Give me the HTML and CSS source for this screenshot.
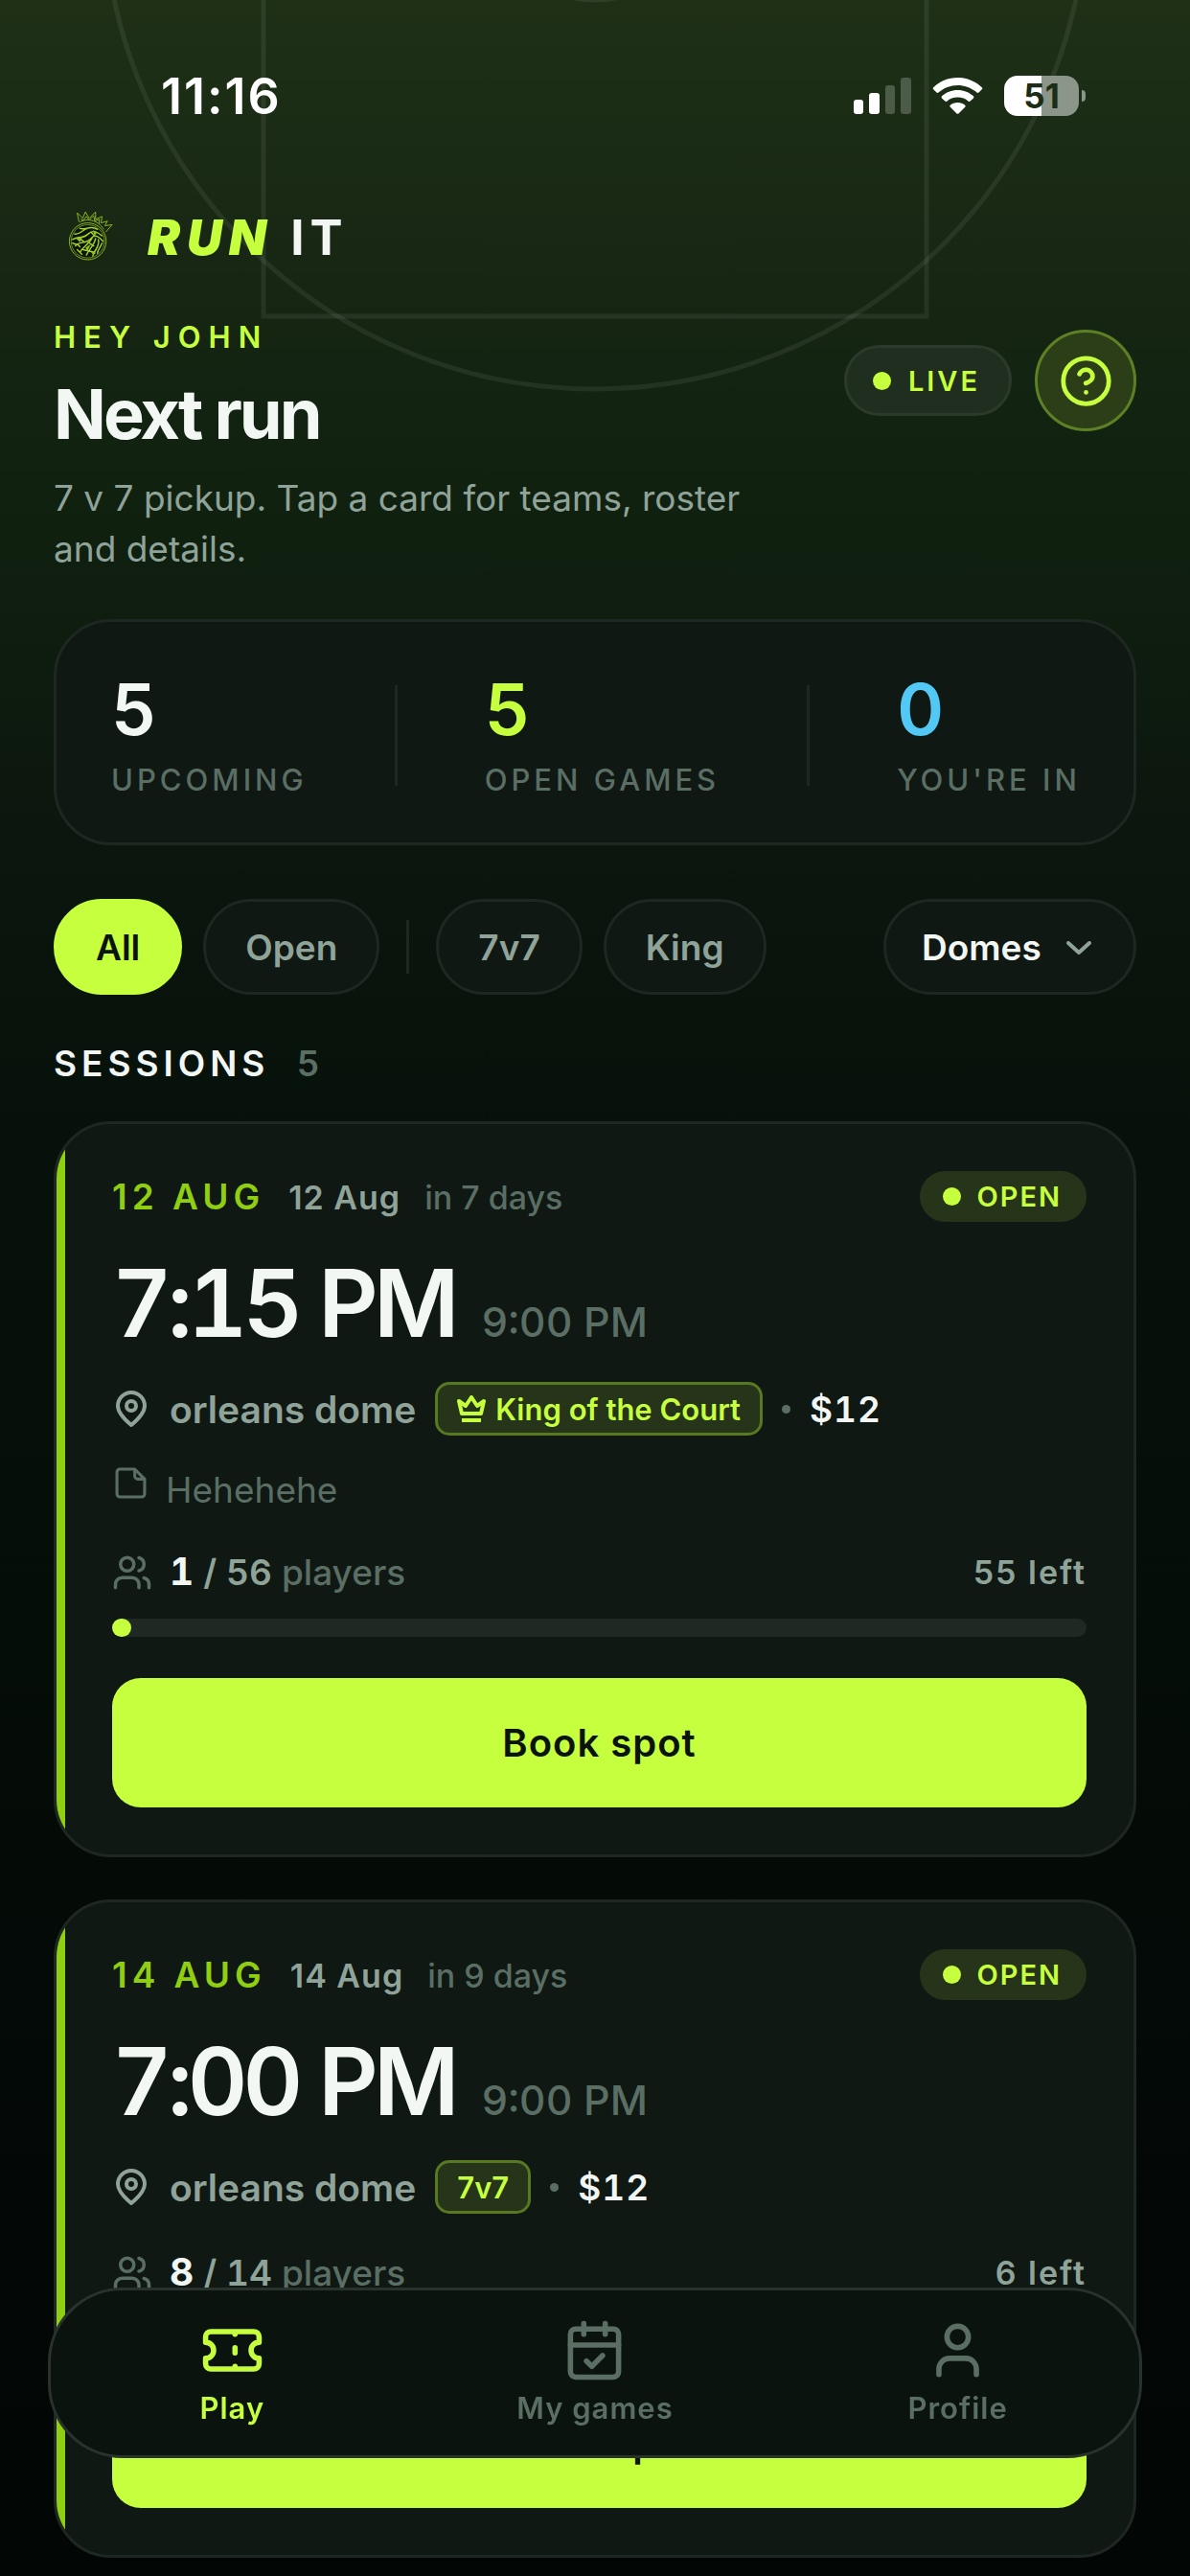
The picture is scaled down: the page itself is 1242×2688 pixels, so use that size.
FILE: index.html
```html
<!DOCTYPE html>
<html lang="en">
<head>
<meta charset="utf-8">
<meta name="viewport" content="width=device-width, initial-scale=1">
<title>Run It – Next run</title>
<link rel="stylesheet" href="styles.css">
</head>
<body>
<svg class="court" viewBox="0 0 1242 420" aria-hidden="true">
  <circle cx="621" cy="-107" r="513"/>
  <circle cx="621" cy="-113" r="113"/>
  <path d="M275-10V330H967V-10"/>
</svg>

<div class="status">
  <span class="clock">11:16</span>
  <div class="signals">
    <svg class="bars" viewBox="0 0 60 38" aria-hidden="true">
      <rect x="0" y="23" width="10" height="15" rx="3"/>
      <rect x="16" y="16" width="11" height="22" rx="3"/>
      <rect class="off" x="33" y="8" width="10" height="30" rx="3"/>
      <rect class="off" x="49" y="0" width="11" height="38" rx="3"/>
    </svg>
    <svg class="wifi" viewBox="0 0 52 38" aria-hidden="true">
      <path d="M26 0C36 0 45 4 51.300 10.200Q52.300 11.300 51.300 12.300L48 15.600Q47 16.500 46 15.600C40.600 10.700 33.600 7.900 26 7.900S11.400 10.700 6 15.600Q5 16.500 4 15.600L.7 12.300Q-.3 11.300.7 10.200C7 4 16 0 26 0Z"/>
      <path d="M26 13C32.400 13 38.200 15.400 42.500 19.300Q43.500 20.300 42.500 21.400L39.200 24.600Q38.200 25.500 37.200 24.700C34.200 22.100 30.300 20.600 26 20.600S17.800 22.100 14.800 24.700Q13.800 25.500 12.800 24.600L9.500 21.400Q8.500 20.300 9.500 19.300C13.800 15.400 19.600 13 26 13Z"/>
      <path d="M26 26C29 26 31.700 27 33.700 28.700Q34.700 29.700 33.700 30.700L27 37.400Q26 38.300 25 37.400L18.300 30.700Q17.300 29.700 18.300 28.700C20.300 27 23 26 26 26Z"/>
    </svg>
    <div class="battery"><span class="battery-level">51</span><i class="battery-tip"></i></div>
  </div>
</div>

<main class="page">
  <div class="brand">
    <svg class="crest" viewBox="0 0 50 54" aria-hidden="true">
      <g fill="none" stroke="#8fb822" stroke-width="1">
        <path d="M13 11 11 1 17 7 20 0 24 7 31 0 31 8 38 5 37 12 44 10 41 15 49 14 42 22"/>
        <path d="M14 11C21 7 33 8 40 19M15 8 18 9 21 5 24 9 29 4 30 10 35 8 35 13"/>
        <circle cx="22.500" cy="32" r="20"/>
      </g>
      <circle cx="22.500" cy="32" r="18" fill="#0c1408" stroke="#6c8f1c" stroke-width="1"/>
      <g fill="none" stroke="#a3d22a" stroke-width="1.500" stroke-linecap="round">
        <path d="M8 24C14 25 16 20 22 18M14 18C20 20 26 14 33 19M6 30C12 26 17 30 23 24C28 19 33 22 38 26"/>
        <path d="M9 37C14 31 20 36 27 28C30 24 35 27 39 32M12 28 18 32M6 34C9 36 12 34 14 38"/>
        <path d="M27 29C23 36 17 38 14 44M31 29C30 36 24 40 21 47M34 30C36 38 29 42 28 48M38 34C36 39 33 42 33 45M17 41C22 43 25 41 30 45M11 41 16 46M23 33 29 37M26 22 30 26"/>
      </g>
      <path d="M10 29 17 27 14 33ZM20 39 26 35 22 43ZM28 20 33 22 30 26ZM26 44 32 41 29 47Z" fill="#8fc31f"/>
    </svg>
    <span class="wordmark"><em>RUN</em> IT</span>
  </div>

  <header class="hero">
    <div class="hero-text">
      <p class="eyebrow">HEY JOHN</p>
      <h1>Next run</h1>
      <p class="lead">7 v 7 pickup. Tap a card for teams, roster and details.</p>
    </div>
    <div class="hero-actions">
      <span class="live"><i class="dot"></i>LIVE</span>
      <button class="help" type="button" aria-label="Help">
        <svg viewBox="0 0 24 24" aria-hidden="true"><circle cx="12" cy="12" r="10"/><path d="M9.100 9a3 3 0 0 1 5.800 1c0 2-3 3-3 3M12 17h.01"/></svg>
      </button>
    </div>
  </header>

  <section class="stats" aria-label="Totals">
    <p class="stat"><strong>5</strong><span>UPCOMING</span></p>
    <i class="stat-rule"></i>
    <p class="stat stat-open"><strong>5</strong><span>OPEN GAMES</span></p>
    <i class="stat-rule"></i>
    <p class="stat stat-in"><strong>0</strong><span>YOU'RE IN</span></p>
  </section>

  <div class="filters">
    <button class="chip chip-on" type="button" aria-pressed="true">All</button>
    <button class="chip" type="button" aria-pressed="false">Open</button>
    <i class="filter-rule"></i>
    <button class="chip" type="button" aria-pressed="false">7v7</button>
    <button class="chip" type="button" aria-pressed="false">King</button>
    <div class="venue">
      <select aria-label="Venue"><option>Domes</option></select>
      <svg viewBox="0 0 26 14" aria-hidden="true"><path d="M2 2 13 12 24 2"/></svg>
    </div>
  </div>

  <h2 class="section-title">SESSIONS <span>5</span></h2>

  <div class="sessions">
    <article class="card">
      <div class="card-top">
        <div class="when"><strong>12 AUG</strong><span>12 Aug</span><small>in 7 days</small></div>
        <span class="state"><i class="dot"></i>OPEN</span>
      </div>
      <div class="time"><strong>7:15 PM</strong><span>9:00 PM</span></div>
      <div class="place">
        <svg class="pin" viewBox="0 0 32 38" aria-hidden="true"><path d="M30 16C30 24 22 31 16 36C10 31 2 24 2 16A14 14 0 0 1 30 16Z"/><circle cx="16" cy="16" r="5"/></svg>
        <span class="venue-name">orleans dome</span>
        <span class="tag"><svg class="crown" viewBox="0 0 30 28" aria-hidden="true"><path d="M5 19 2 6 9 11 15 2 21 11 28 6 25 19ZM5 26H25"/></svg>King of the Court</span>
        <i class="sep"></i>
        <span class="price">$12</span>
      </div>
      <p class="note">
        <svg viewBox="0 0 32 32" aria-hidden="true"><path d="M20 2H5A3 3 0 0 0 2 5V27A3 3 0 0 0 5 30H27A3 3 0 0 0 30 27V12ZM20 2V9A3 3 0 0 0 23 12H30"/></svg>
        Hehehehe
      </p>
      <div class="players">
        <svg viewBox="0 0 24 24" aria-hidden="true"><path d="M16 21v-2a4 4 0 0 0-4-4H6a4 4 0 0 0-4 4v2M16 3.130a4 4 0 0 1 0 7.750M22 21v-2a4 4 0 0 0-3-3.870"/><circle cx="9" cy="7" r="4"/></svg>
        <span class="count"><b>1</b> / 56 <small>players</small></span>
        <span class="left">55 left</span>
      </div>
      <div class="meter"><i style="width:2%"></i></div>
      <button class="book" type="button">Book spot</button>
    </article>

    <article class="card">
      <div class="card-top">
        <div class="when"><strong>14 AUG</strong><span>14 Aug</span><small>in 9 days</small></div>
        <span class="state"><i class="dot"></i>OPEN</span>
      </div>
      <div class="time"><strong>7:00 PM</strong><span>9:00 PM</span></div>
      <div class="place">
        <svg class="pin" viewBox="0 0 32 38" aria-hidden="true"><path d="M30 16C30 24 22 31 16 36C10 31 2 24 2 16A14 14 0 0 1 30 16Z"/><circle cx="16" cy="16" r="5"/></svg>
        <span class="venue-name">orleans dome</span>
        <span class="tag">7v7</span>
        <i class="sep"></i>
        <span class="price">$12</span>
      </div>
      <div class="players">
        <svg viewBox="0 0 24 24" aria-hidden="true"><path d="M16 21v-2a4 4 0 0 0-4-4H6a4 4 0 0 0-4 4v2M16 3.130a4 4 0 0 1 0 7.750M22 21v-2a4 4 0 0 0-3-3.870"/><circle cx="9" cy="7" r="4"/></svg>
        <span class="count"><b>8</b> / 14 <small>players</small></span>
        <span class="left">6 left</span>
      </div>
      <div class="meter"><i style="width:57%"></i></div>
      <button class="book" type="button">Book spot</button>
    </article>
  </div>
</main>

<nav class="tabs" aria-label="Main">
  <a class="tab tab-on" href="#play" aria-current="page">
    <svg viewBox="0 0 24 24" aria-hidden="true"><path d="M2 9a3 3 0 0 1 0 6v2a2 2 0 0 0 2 2h16a2 2 0 0 0 2-2v-2a3 3 0 0 1 0-6V7a2 2 0 0 0-2-2H4a2 2 0 0 0-2 2ZM13 5v1M13 11v2M13 18v1"/></svg>
    Play
  </a>
  <a class="tab" href="#games">
    <svg viewBox="0 0 24 24" aria-hidden="true"><path d="M8 2v4M16 2v4M3 10h18M9 16l2 2 4-4"/><rect x="3" y="4" width="18" height="18" rx="2"/></svg>
    My games
  </a>
  <a class="tab" href="#profile">
    <svg viewBox="0 0 24 24" aria-hidden="true"><path d="M19 21v-2a4 4 0 0 0-4-4H9a4 4 0 0 0-4 4v2"/><circle cx="12" cy="7" r="4"/></svg>
    Profile
  </a>
</nav>
</body>
</html>
```
FILE: styles.css
```css
:root {
  --lime: #c6ff3d;
  --lime-deep: #90ce12;
  --white: #f2f7f4;
  --soft: #8fa399;
  --dim: #5a6e64;
  --panel: #0f1813;
  --line: #1e2722;
  --tint: #26341a;
}

* { box-sizing: border-box; }

html { background: #030806; }

body {
  margin: 0;
  min-height: 100vh;
  position: relative;
  background: linear-gradient(180deg, #1f3017 0, #162613 300px, #10200f 560px, #0b160e 880px, #07110b 1200px, #050d08 1700px, #030806 2300px, #020605 2688px);
  color: var(--white);
  font-family: Inter, "Liberation Sans", sans-serif;
  font-size: 37px;
}

p, h1, h2 { margin: 0; }
button, select { font-family: inherit; cursor: pointer; }
svg { display: block; flex: none; }
.dot { width: 19px; height: 19px; border-radius: 50%; background: var(--lime); }

/* Court markings behind the header */
.court {
  position: absolute;
  top: 0;
  left: 0;
  width: 100%;
  fill: none;
  stroke: #ffffff;
  stroke-opacity: .07;
  stroke-width: 5;
}

/* Status bar */
.status {
  position: relative;
  height: 200px;
  padding: 0 109px 0 168px;
  display: flex;
  align-items: center;
  justify-content: space-between;
  color: #ffffff;
}
.clock { font-size: 52px; font-weight: 600; letter-spacing: 2px; }
.signals { display: flex; align-items: center; gap: 22px; }
.bars, .wifi { height: 38px; fill: #ffffff; }
.bars { width: 60px; }
.bars .off { opacity: .22; }
.wifi { width: 53px; }
.battery {
  position: relative;
  width: 85px;
  height: 42px;
}
.battery-level {
  display: block;
  width: 78px;
  border-radius: 14px;
  background: linear-gradient(90deg, #ffffff 50%, #8b9588 50%);
  color: #1c2d17;
  font-size: 35px;
  font-weight: 700;
  line-height: 42px;
  text-align: center;
}
.battery-tip {
  position: absolute;
  right: 0;
  top: 15px;
  width: 4px;
  height: 12px;
  border-radius: 0 4px 4px 0;
  background: #8b9588;
}

.page { position: relative; padding: 0 56px 16px; }

/* Brand */
.brand {
  height: 94px;
  padding-left: 14px;
  display: flex;
  align-items: center;
  gap: 36px;
}
.crest { width: 48px; height: 54px; }
.wordmark {
  font-size: 51px;
  font-weight: 700;
  letter-spacing: 6px;
}
.wordmark em { color: var(--lime); font-weight: 900; letter-spacing: 7px; }

/* Greeting */
.hero {
  margin-top: 38px;
  display: flex;
  justify-content: space-between;
}
.hero-text { width: 740px; }
.eyebrow {
  color: var(--lime);
  font-size: 31px;
  font-weight: 600;
  line-height: 40px;
  letter-spacing: 8px;
}
h1 {
  margin-top: 16px;
  font-size: 72px;
  font-weight: 700;
  line-height: 88px;
  letter-spacing: -3px;
}
.lead { margin-top: 17px; color: var(--soft); line-height: 53px; }
.hero-actions {
  height: 106px;
  margin-top: 12px;
  display: flex;
  align-items: center;
  gap: 24px;
}
.live {
  height: 74px;
  padding: 0 30px 0 27px;
  display: flex;
  align-items: center;
  gap: 18px;
  border: 3px solid #2b3a2a;
  border-radius: 37px;
  background: #202e1f;
  color: var(--lime);
  font-size: 29px;
  font-weight: 600;
  letter-spacing: 3px;
}
.help {
  width: 106px;
  height: 106px;
  padding: 0;
  display: grid;
  place-items: center;
  border: 3px solid #5e8024;
  border-radius: 50%;
  background: #2b3e18;
  color: var(--lime);
}
.help svg { width: 57px; height: 57px; }
.help svg, .tab svg, .players svg {
  fill: none;
  stroke: currentColor;
  stroke-width: 2;
  stroke-linecap: round;
  stroke-linejoin: round;
}

/* Totals */
.stats {
  margin-top: 47px;
  padding: 51px 55px 45px 57px;
  display: flex;
  align-items: center;
  justify-content: space-between;
  border: 3px solid var(--line);
  border-radius: 60px;
  background: var(--panel);
}
.stat { display: flex; flex-direction: column; gap: 14px; }
.stat span { color: var(--dim); font-size: 31px; font-weight: 500; line-height: 40px; letter-spacing: 4px; }
.stat strong { font-size: 74px; font-weight: 600; line-height: 80px; }
.stat-open strong { color: var(--lime); }
.stat-in strong { color: #52c8f5; }
.stat-rule { width: 3px; height: 105px; background: var(--line); }

/* Filters */
.filters { margin-top: 56px; display: flex; align-items: center; gap: 22px; }
.chip {
  height: 100px;
  padding: 0 41px;
  border: 3px solid var(--line);
  border-radius: 50px;
  background: var(--panel);
  color: var(--soft);
  font-size: 37px;
  font-weight: 600;
}
.chip-on { border-color: var(--lime); background: var(--lime); color: #0a140c; }
.filter-rule { width: 3px; height: 56px; margin: 0 6px; background: var(--line); }
.venue { position: relative; margin-left: auto; }
.venue select {
  height: 100px;
  padding: 0 96px 0 37px;
  appearance: none;
  border: 3px solid var(--line);
  border-radius: 50px;
  background: var(--panel);
  color: var(--white);
  font-size: 37px;
  font-weight: 600;
}
.venue svg {
  position: absolute;
  right: 47px;
  top: 44px;
  width: 26px;
  height: 14px;
  fill: none;
  stroke: var(--soft);
  stroke-width: 4;
  stroke-linecap: round;
  stroke-linejoin: round;
  pointer-events: none;
}

.section-title {
  margin-top: 48px;
  font-size: 37px;
  font-weight: 600;
  line-height: 48px;
  letter-spacing: 5px;
}
.section-title span { margin-left: 14px; color: var(--dim); }

/* Session cards */
.sessions { margin-top: 36px; display: flex; flex-direction: column; gap: 44px; }
.card {
  position: relative;
  padding: 49px 49px 49px 58px;
  overflow: hidden;
  border: 3px solid var(--line);
  border-radius: 60px;
  background: var(--panel);
}
.card::before {
  content: "";
  position: absolute;
  inset: 0 auto 0 0;
  width: 9px;
  background: var(--lime-deep);
}
.card-top { height: 53px; display: flex; align-items: center; justify-content: space-between; }
.when { display: flex; align-items: baseline; gap: 25px; }
.when strong { color: var(--lime-deep); font-size: 37px; font-weight: 600; letter-spacing: 5px; }
.when span { color: var(--soft); font-size: 34px; font-weight: 600; letter-spacing: 1px; }
.when small { color: var(--dim); font-size: 34px; font-weight: 500; }
.state {
  height: 53px;
  padding: 0 26px 0 24px;
  display: flex;
  align-items: center;
  gap: 16px;
  border-radius: 27px;
  background: var(--tint);
  color: var(--lime);
  font-size: 29px;
  font-weight: 600;
  letter-spacing: 2px;
}
.time {
  height: 104px;
  margin-top: 33px;
  display: flex;
  align-items: baseline;
  gap: 28px;
  line-height: 104px;
  font-variant-numeric: tabular-nums;
}
.time strong { font-size: 97px; font-weight: 600; letter-spacing: -5px; }
.time span { color: var(--dim); font-size: 43px; font-weight: 500; }
.place { height: 56px; margin-top: 30px; display: flex; align-items: center; gap: 20px; }
.pin { width: 32px; height: 38px; margin: 0 4px; }
.pin, .note svg { fill: none; stroke: var(--soft); stroke-width: 4; stroke-linejoin: round; }
.venue-name { color: var(--soft); font-size: 39px; font-weight: 600; }
.tag {
  height: 56px;
  padding: 0 20px;
  display: flex;
  align-items: center;
  gap: 10px;
  border: 3px solid #587822;
  border-radius: 15px;
  background: var(--tint);
  color: var(--lime);
  font-size: 31px;
  font-weight: 600;
}
.crown { width: 30px; height: 28px; fill: none; stroke: currentColor; stroke-width: 4; stroke-linejoin: round; }
.sep { width: 9px; height: 9px; border-radius: 50%; background: var(--dim); }
.price { font-size: 37px; font-weight: 600; font-variant-numeric: tabular-nums; letter-spacing: 1px; }
.note {
  margin-top: 33px;
  display: flex;
  gap: 20px;
  color: var(--dim);
  line-height: 48px;
}
.note svg { width: 33px; height: 33px; margin-left: 3px; stroke: var(--dim); stroke-width: 3; }
.players { margin-top: 37px; display: flex; align-items: center; line-height: 48px; }
.players svg { width: 42px; height: 42px; color: var(--dim); }
.count { margin-left: 18px; color: var(--soft); font-size: 37px; font-weight: 600; font-variant-numeric: tabular-nums; }
.count b { color: var(--white); font-size: 39px; font-weight: 700; }
.count small { color: var(--dim); font-size: 37px; font-weight: 500; }
.left { margin-left: auto; color: var(--soft); font-size: 34px; font-weight: 600; letter-spacing: 2px; }
.meter { height: 19px; margin-top: 24px; border-radius: 10px; background: #1f2823; }
.meter i { display: block; height: 19px; min-width: 19px; max-width: 100%; border-radius: 10px; background: var(--lime); }
.book {
  width: 100%;
  height: 135px;
  margin-top: 43px;
  padding: 0;
  display: block;
  border: 0;
  border-radius: 30px;
  background: var(--lime);
  color: #0a140c;
  font-size: 40px;
  font-weight: 600;
  letter-spacing: 1px;
}

/* Floating tab bar */
.tabs {
  position: fixed;
  left: 50px;
  right: 50px;
  bottom: 123px;
  height: 178px;
  display: grid;
  grid-template-columns: repeat(3, 1fr);
  border: 3px solid #2a322d;
  border-radius: 78px;
  background: #0b130f;
}
.tab {
  padding-top: 29px;
  display: flex;
  flex-direction: column;
  align-items: center;
  gap: 8px;
  color: var(--dim);
  font-size: 31px;
  font-weight: 600;
  line-height: 38px;
  letter-spacing: 1px;
  text-decoration: none;
}
.tab svg { width: 67px; height: 67px; }
.tab-on { color: var(--lime); }
```
